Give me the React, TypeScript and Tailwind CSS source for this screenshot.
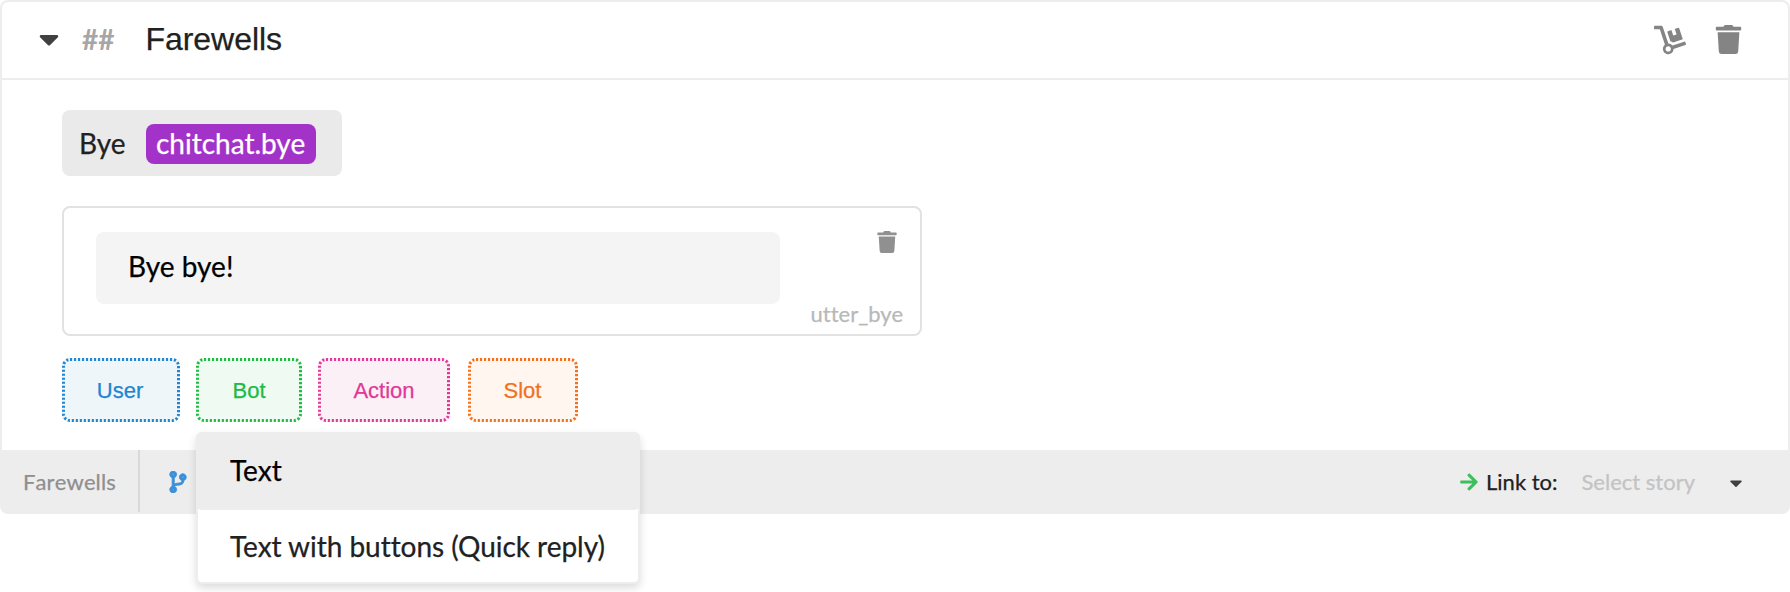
import { FaTrash, FaDolly, FaCodeBranch, FaCaretDown, FaArrowRight } from "react-icons/fa";

type AddButton = { label: string; width: number; box: string; stroke: string };

const addButtons: AddButton[] = [
  { label: "User", width: 118, box: "w-[118px] pr-0.5 bg-[#eef6fa] text-[#2185d0]", stroke: "#2185d0" },
  { label: "Bot", width: 106, box: "ml-4 w-[106px] bg-[#effaf2] text-[#21ba45]", stroke: "#21ba45" },
  { label: "Action", width: 132, box: "ml-4 w-[132px] bg-[#fcf0f7] text-[#e03997]", stroke: "#e03997" },
  { label: "Slot", width: 110, box: "ml-[18px] w-[110px] pr-px bg-[#fff6ef] text-[#f2711c]", stroke: "#f2711c" },
];

function DottedFrame({ width, stroke }: { width: number; stroke: string }) {
  return (
    <svg className="absolute inset-0" width={width} height={64} fill="none">
      <rect x="1.5" y="1.5" width={width - 3} height={61} rx="6.5" stroke={stroke} strokeWidth="3" strokeDasharray="2.1 1.9" />
    </svg>
  );
}

export default function App() {
  return (
    <div className="h-[592px] w-[1790px] bg-white font-['Lato',sans-serif] text-[#212121] [font-variant-ligatures:none] [-webkit-text-stroke:0.25px]">
      <div className="flex h-[450px] flex-col rounded-t-lg border-x-2 border-t-2 border-[#ededed]">
        <header className="flex h-[78px] shrink-0 items-center border-b-2 border-[#ededed] pb-px">
          <FaCaretDown className="mb-0.5 ml-[31px] size-[32px] text-[#404040]" />
          <span className="ml-[17px] pb-0.5 text-[28px] font-bold leading-none text-[#a6a6a6] [-webkit-text-stroke:0px]">##</span>
          <h1 className="ml-[31px] pb-px font-['Liberation_Sans',sans-serif] text-[32px] leading-none tracking-[-0.05px]">Farewells</h1>
          <FaDolly className="ml-auto size-[32px] text-[#848484]" />
          <FaTrash className="ml-[28px] mr-[45px] size-[29px] text-[#848484]" />
        </header>

        <main className="px-[60px] pt-[30px]">
          <div className="flex h-[66px] w-[280px] items-center rounded-lg bg-[#eaeaea] pl-[17px] pt-0.5 text-[28px]">
            <span className="pb-0.5">Bye</span>
            <span className="ml-[20px] flex h-10 w-[170px] items-center justify-center rounded-lg bg-[#a333c8] pb-0.5 text-white">
              chitchat.bye
            </span>
          </div>

          <div className="mt-[30px] flex h-[130px] w-[860px] rounded-lg border-2 border-[#e2e2e2] pl-8 pt-6">
            <div className="flex h-[72px] w-[684px] items-center rounded-lg bg-[#f4f4f4] pb-1 pl-8 text-[28px] text-black">
              Bye bye!
            </div>
            <div className="flex grow flex-col items-end">
              <FaTrash className="mr-[22px] mt-[-1px] size-[22px] text-[#909090]" />
              <span className="mr-[17px] mt-[46px] text-[22px] leading-[30px] text-[#b8b8b8]">utter_bye</span>
            </div>
          </div>

          <div className="mt-[22px] flex">
            {addButtons.map((b) => (
              <button
                key={b.label}
                className={`relative flex h-16 items-center justify-center rounded-lg font-['Liberation_Sans',sans-serif] text-[22px] ${b.box}`}
              >
                <DottedFrame width={b.width} stroke={b.stroke} />
                {b.label}
              </button>
            ))}
          </div>
        </main>
      </div>

      <footer className="relative flex h-16 items-center rounded-b-lg bg-[#ededed] text-[22px]">
        <span className="flex h-[62px] w-[140px] items-center self-start border-r-2 border-[#d9d9d9] pl-[23px] tracking-[0.12px] text-[#8f8f8f] [font-kerning:none]">
          Farewells
        </span>
        <FaCodeBranch className="ml-[27px] size-[22px] stroke-[#3b8fd9] stroke-[20px] text-[#3b8fd9]" />
        <FaArrowRight className="ml-auto size-[20px] text-[#3cc05a]" />
        <span className="ml-[7px] pb-px">Link to:</span>
        <span className="ml-[24px] pb-px text-[#c3c3c3]">Select story</span>
        <FaCaretDown className="ml-[31px] mr-[44px] mt-0.5 size-[20px] text-[#404040]" />

        <div className="absolute left-[196px] top-[-18px] w-[444px] text-[28px]">
          <div className="flex h-[152px] flex-col rounded-md border-2 border-[#ededed] bg-white shadow-[0_4px_8px_rgba(0,0,0,0.14)]">
            <div className="-mx-0.5 -mt-0.5 flex h-[78px] items-center rounded-md bg-[#ededed] pb-[3px] pl-[34px] text-black">Text</div>
            <div className="flex grow items-center pb-px pl-8 tracking-[-0.04px]">Text with buttons (Quick reply)</div>
          </div>
        </div>
      </footer>
    </div>
  );
}
